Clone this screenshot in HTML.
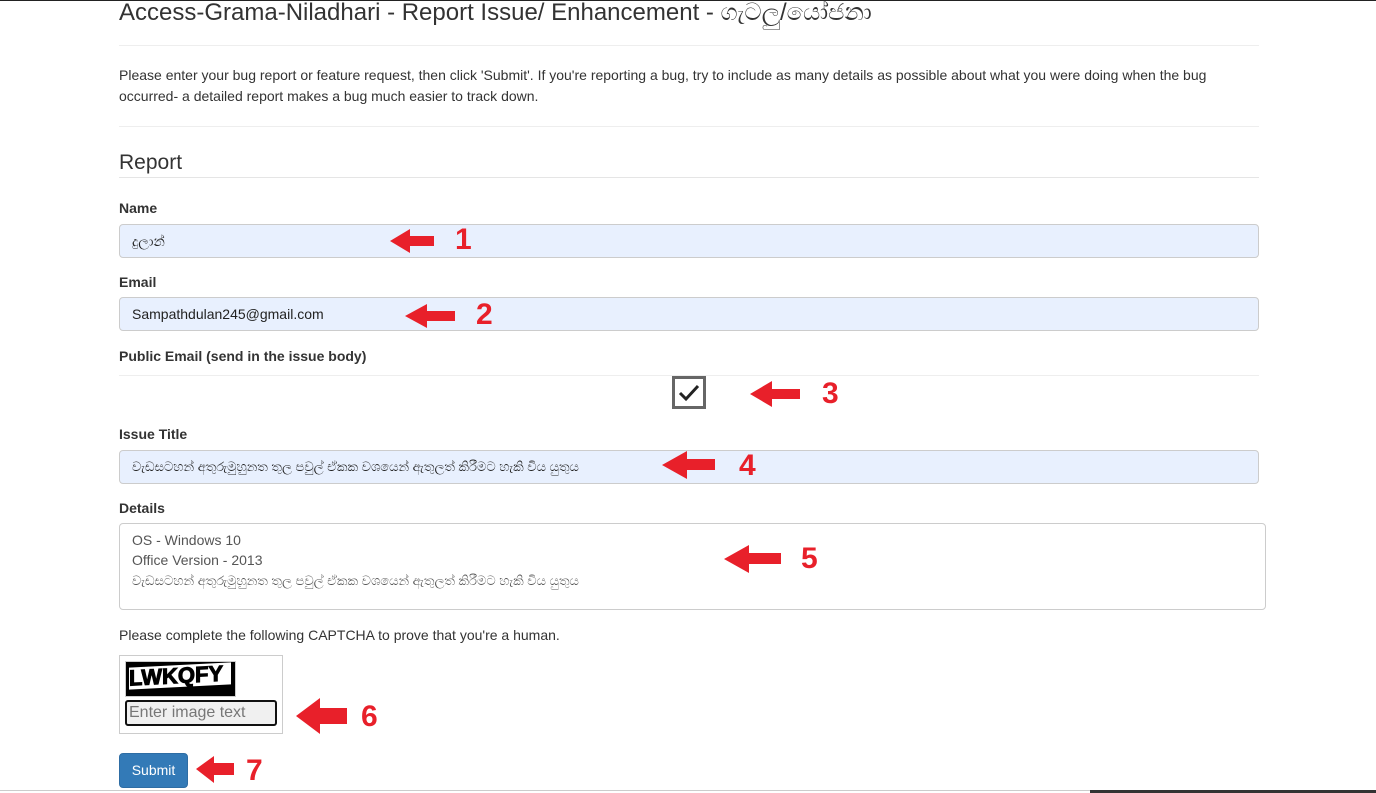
<!DOCTYPE html>
<html><head><meta charset="utf-8"><style>
*{box-sizing:border-box;margin:0;padding:0}
body{width:1376px;height:793px;overflow:hidden;background:#fff;font-family:"Liberation Sans",sans-serif;color:#333;position:relative;font-size:14px}
.a{position:absolute}
.hr{position:absolute;left:119px;width:1140px;height:1px;background:#eee}
.lbl{position:absolute;left:119px;font-weight:bold;font-size:14px}
.inp{position:absolute;left:119px;width:1140px;height:34px;background:#e8f0fe;border:1px solid #ccc;border-radius:4px;padding:0 12px;line-height:32px;font-size:14px;color:#222}
.num{position:absolute;color:#e8202a;font-weight:bold;font-size:30px;font-family:"Liberation Sans",sans-serif;line-height:1}
svg.ar{position:absolute}
</style></head><body>
<div class="a" style="left:0;top:0;width:1376px;height:1px;background:#222"></div>
<div class="a" style="left:119px;top:0;font-size:24px;line-height:26px;color:#333">Access-Grama-Niladhari - Report Issue/ Enhancement - ගැටලු/යෝජනා</div>
<div class="hr" style="top:45px"></div>
<div class="a" style="left:119px;top:65px;width:1120px;line-height:21px">Please enter your bug report or feature request, then click 'Submit'. If you're reporting a bug, try to include as many details as possible about what you were doing when the bug occurred- a detailed report makes a bug much easier to track down.</div>
<div class="hr" style="top:126px"></div>
<div class="a" style="left:119px;top:151px;font-size:21px">Report</div>
<div class="hr" style="top:177px;background:#e5e5e5"></div>
<div class="lbl" style="top:200px">Name</div>
<div class="inp" style="top:224px">දුලාන්</div>
<div class="lbl" style="top:274px">Email</div>
<div class="inp" style="top:297px">Sampathdulan245@gmail.com</div>
<div class="lbl" style="top:348px">Public Email (send in the issue body)</div>
<div class="hr" style="top:375px"></div>
<div class="a" style="left:672px;top:376px;width:34px;height:33px;border:3px solid #666;background:#fff"><svg width="28" height="27" viewBox="0 0 28 27"><path d="M5 14l6 6L23 7" stroke="#222" stroke-width="3" fill="none"/></svg></div>
<div class="lbl" style="top:426px">Issue Title</div>
<div class="inp" style="top:450px;font-size:13px">වැඩසටහන් අතුරුමුහුනත තුල පවුල් ඒකක වශයෙන් ඇතුලත් කිරීමට හැකි විය යුතුය</div>
<div class="lbl" style="top:500px">Details</div>
<div class="a" style="left:119px;top:523px;width:1147px;height:87px;border:1px solid #ccc;border-radius:4px;padding:6px 12px;line-height:20px;color:#555">OS - Windows 10<br>Office Version - 2013<br><span style="font-size:13px">වැඩසටහන් අතුරුමුහුනත තුල පවුල් ඒකක වශයෙන් ඇතුලත් කිරීමට හැකි විය යුතුය</span></div>
<div class="a" style="left:119px;top:627px">Please complete the following CAPTCHA to prove that you're a human.</div>
<div class="a" style="left:119px;top:655px;width:164px;height:79px;border:1px solid #ccc"></div>
<div class="a" style="left:125px;top:661px;width:111px;height:36px;background:#000;border:1px solid #ccc;overflow:hidden"><div style="margin:3px 0 0 3px;font-weight:bold;font-size:22px;color:#fff;-webkit-text-stroke:1px #000;background:#fff;width:102px;height:22px;line-height:22px;color:#000;transform:skewY(-3deg)">LWKQFY</div></div>
<div class="a" style="left:125px;top:700px;width:152px;height:26px;border:2px solid #111;border-radius:3px;background:#f0f0f0;color:#777;font-size:16px;padding:0 2px;line-height:22px">Enter image text</div>
<div class="a" style="left:119px;top:753px;width:69px;height:35px;background:#337ab7;border:1px solid #2e6da4;border-radius:4px;color:#fff;text-align:center;line-height:33px">Submit</div>
<div class="a" style="left:0;top:790px;width:1376px;height:3px;background:#fff;border-top:1px solid #ccc"></div>
<div class="a" style="left:1090px;top:790px;width:286px;height:3px;background:#333"></div>

<svg class="ar" style="left:390px;top:229px" width="44" height="24"><path d="M0 12L20 0V7H44V17H20V24Z" fill="#e8202a"/></svg>
<div class="num" style="left:455px;top:225px">1</div>
<svg class="ar" style="left:405px;top:304px" width="50" height="24"><path d="M0 12L22 0V7H50V17H22V24Z" fill="#e8202a"/></svg>
<div class="num" style="left:476px;top:300px">2</div>
<svg class="ar" style="left:750px;top:381px" width="50" height="26"><path d="M0 13L22 0V8H50V18H22V26Z" fill="#e8202a"/></svg>
<div class="num" style="left:822px;top:379px">3</div>
<svg class="ar" style="left:662px;top:451px" width="53" height="28"><path d="M0 14L25 0V8H53V19H25V28Z" fill="#e8202a"/></svg>
<div class="num" style="left:739px;top:451px">4</div>
<svg class="ar" style="left:724px;top:545px" width="57" height="28"><path d="M0 14L25 0V8H57V19H25V28Z" fill="#e8202a"/></svg>
<div class="num" style="left:801px;top:544px">5</div>
<svg class="ar" style="left:296px;top:698px" width="51" height="36"><path d="M0 18L24 0V10H51V26H24V36Z" fill="#e8202a"/></svg>
<div class="num" style="left:361px;top:702px">6</div>
<svg class="ar" style="left:196px;top:756px" width="38" height="27"><path d="M0 13L18 0V7H38V19H18V27Z" fill="#e8202a"/></svg>
<div class="num" style="left:246px;top:756px">7</div>
</body></html>
